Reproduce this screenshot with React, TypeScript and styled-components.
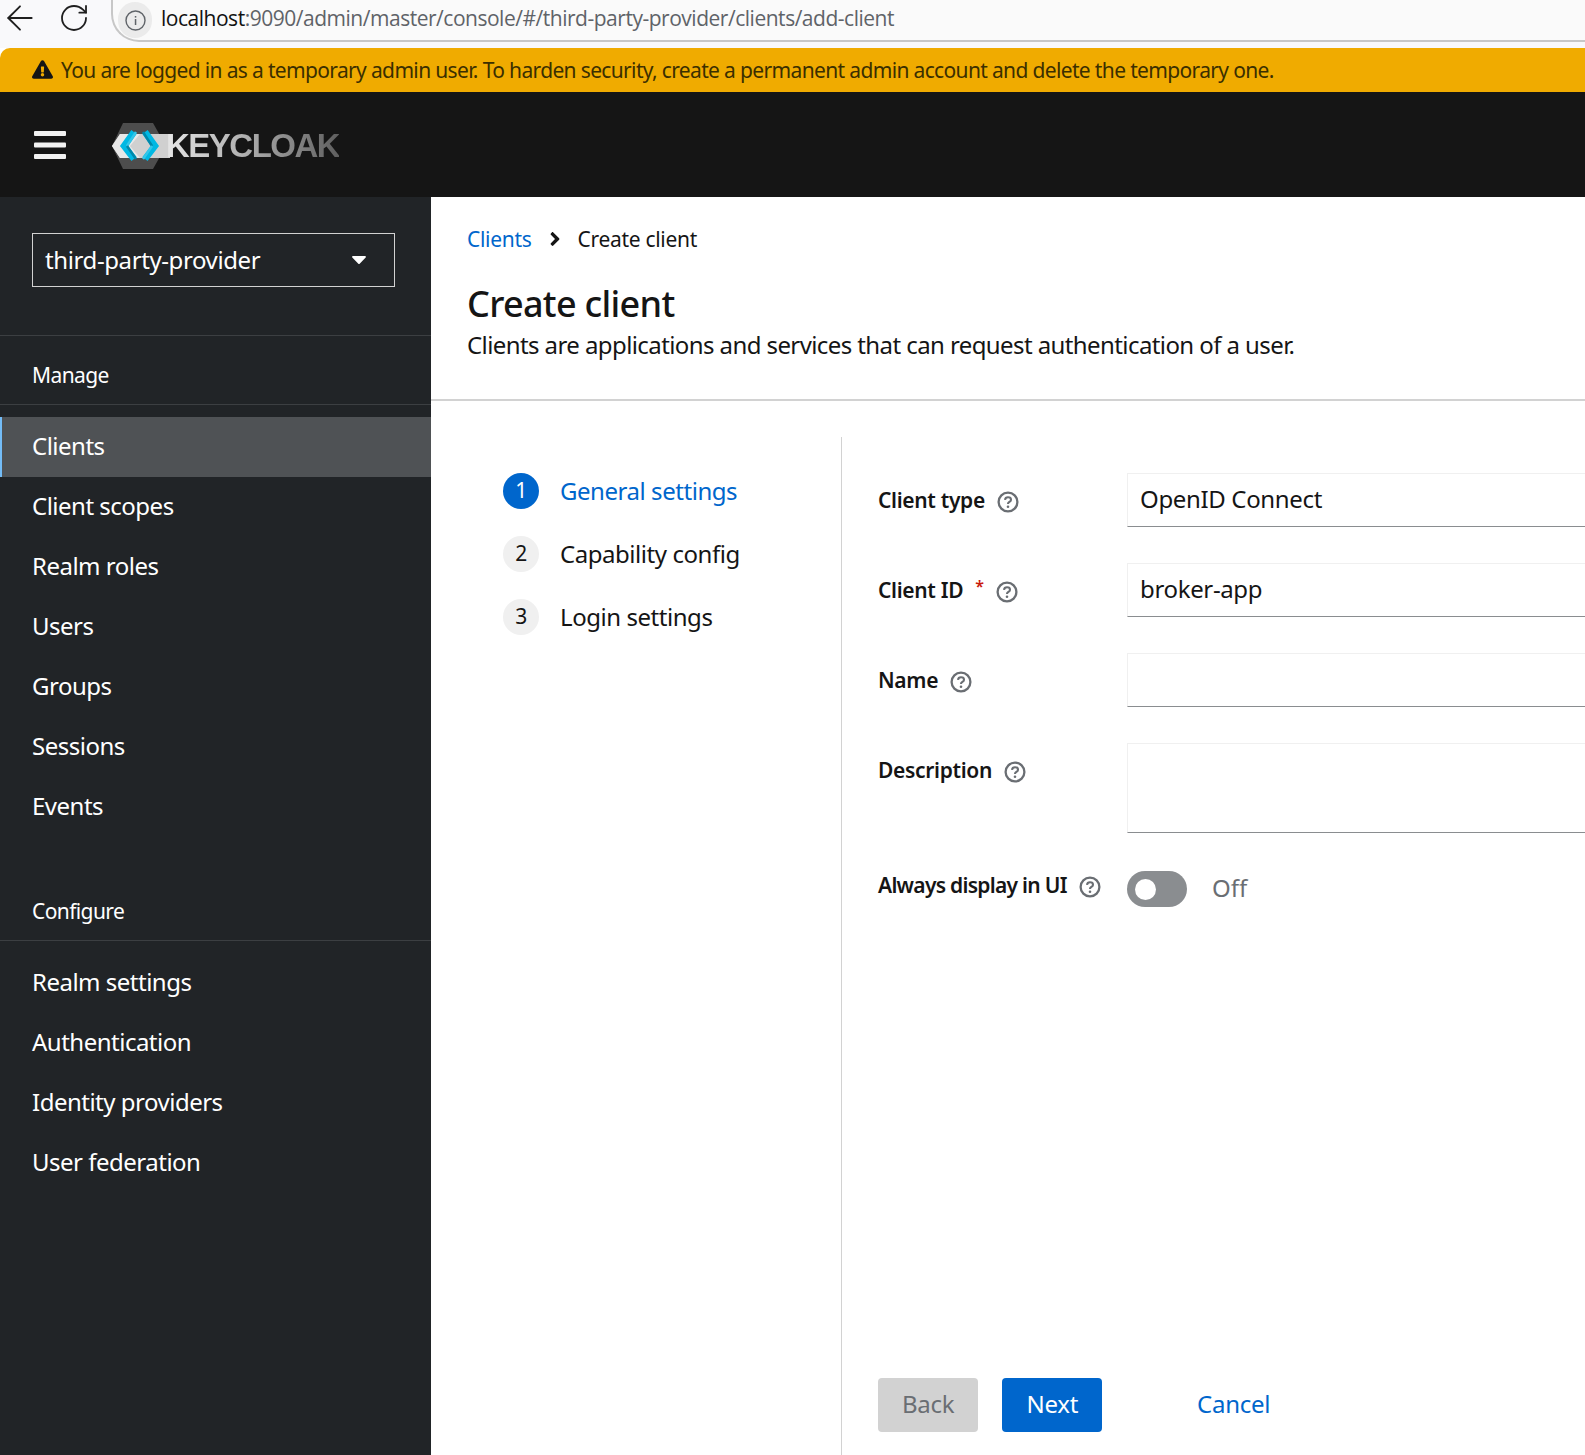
import React from "react";
import styled, { createGlobalStyle } from "styled-components";
import { ArrowLeft, RotateCw } from "lucide-react";
import { FaAngleRight, FaCaretDown, FaExclamationTriangle } from "react-icons/fa";

const GlobalStyle = createGlobalStyle`
  html, body {
    margin: 0;
    padding: 0;
    background: #fff;
  }
  * {
    box-sizing: border-box;
  }
  body {
    font-family: "Noto Sans", "Open Sans", sans-serif;
    color: #151515;
  }
`;

// ============== Browser chrome =============
const Page = styled.div`
  width: 100%;
  height: 100vh;
  display: flex;
  flex-direction: column;
  overflow: hidden;
`;
const BrowserBar = styled.div`
  height: 48px;
  flex: none;
  display: flex;
  align-items: flex-start;
  background: #f9f9fb;
`;
const BarIcon = styled.div<{ $left: number }>`
  width: 24px;
  height: 36px;
  flex: none;
  display: flex;
  align-items: center;
  justify-content: center;
  margin-left: ${(props) => props.$left}px;
  color: #1f1f1f;
  svg {
    flex: none;
  }
`;
const Omnibox = styled.div`
  flex: 1;
  height: 42px;
  margin-left: 25px;
  display: flex;
  align-items: center;
  padding-left: 5px;
  border: 2px solid #c7c7c7;
  border-right: none;
  border-top: none;
  border-radius: 0 0 0 28px;
  background: #fafafa;
`;
const InfoChip = styled.div`
  width: 34px;
  height: 36px;
  border-radius: 17px;
  background: #ebebeb;
  display: flex;
  align-items: center;
  justify-content: center;
  color: #5f6368;
`;
const Url = styled.div`
  margin-left: 9px;
  font-family: "Open Sans", sans-serif;
  font-size: 21px;
  letter-spacing: -0.48px;
  padding-bottom: 4px;
  color: #5f6368;
  white-space: nowrap;
  b {
    font-weight: 400;
    color: #111;
  }
`;
const Banner = styled.div`
  height: 44px;
  flex: none;
  background: #f0ab00;
  border-radius: 10px 0 0 0;
  display: flex;
  align-items: center;
  padding: 0 0 1px 32px;
  font-size: 21px;
  letter-spacing: -0.65px;
  color: #3b2f00;
  white-space: nowrap;
  svg {
    color: #151515;
    margin-right: 8px;
  }
`;

// ============== Masthead =============
const Masthead = styled.header`
  height: 105px;
  flex: none;
  background: #151515;
  display: flex;
  align-items: center;
  padding-left: 34px;
`;
const Logo = styled.div`
  display: flex;
  align-items: center;
  margin-left: 46px;
  padding-top: 3px;
`;
const LogoText = styled.span`
  font-family: "Liberation Sans", sans-serif;
  font-weight: 700;
  font-size: 33px;
  letter-spacing: -1.5px;
  line-height: 40px;
  margin-left: -4px;
  background: linear-gradient(90deg, #e6e6e6 0%, #b0b0b0 45%, #5f5f5f 100%);
  -webkit-background-clip: text;
  background-clip: text;
  color: transparent;
`;

// ============== Sidebar =============
const Body = styled.div`
  flex: 1;
  min-height: 0;
  display: flex;
`;
const Sidebar = styled.nav`
  width: 431px;
  flex: none;
  background: #212427;
  color: #fff;
  padding-top: 36px;
`;
const RealmSelect = styled.div`
  width: 363px;
  height: 54px;
  margin: 0 0 48px 32px;
  padding: 0 23px 2px 12px;
  border: 1px solid #d2d2d2;
  display: flex;
  align-items: center;
  justify-content: space-between;
  font-size: 24px;
  letter-spacing: -0.4px;
`;
const SectionTitle = styled.div<{ $first?: boolean }>`
  height: ${(props) => (props.$first ? "70px" : "69px")};
  display: flex;
  align-items: center;
  padding: 10px 0 0 32px;
  font-size: 21px;
  letter-spacing: -0.6px;
  margin-top: ${(props) => (props.$first ? "0" : "35px")};
  border-top: ${(props) => (props.$first ? "1px solid #3c3f42" : "none")};
  border-bottom: 1px solid #3c3f42;
  margin-bottom: 12px;
`;
const NavItem = styled.div<{ $active?: boolean }>`
  height: 60px;
  display: flex;
  align-items: center;
  padding: 0 0 3px 32px;
  font-size: 24px;
  letter-spacing: -0.5px;
  background: ${(props) => (props.$active ? "#4f5255" : "transparent")};
  box-shadow: ${(props) => (props.$active ? "inset 2px 0 0 #73bcf7" : "none")};
`;

// ============== Main =============
const Main = styled.main`
  flex: 1;
  min-width: 0;
  display: flex;
  flex-direction: column;
`;
const PageHeader = styled.section`
  height: 204px;
  flex: none;
  padding: 24px 36px 0;
  border-bottom: 2px solid #d2d2d2;
`;
const Breadcrumb = styled.div`
  height: 36px;
  display: flex;
  align-items: center;
  font-size: 21px;
  letter-spacing: -0.3px;
  svg {
    margin: 0 11px 0 13px;
  }
`;
const CrumbLink = styled.a`
  color: #06c;
`;
const Title = styled.h1`
  margin: 24px 0 0;
  font-size: 36px;
  line-height: 46px;
  font-weight: 500;
  letter-spacing: -0.7px;
`;
const Subtitle = styled.p`
  margin: 0;
  font-size: 24px;
  line-height: 36px;
  letter-spacing: -0.59px;
`;
const Wizard = styled.div`
  flex: 1;
  min-height: 0;
  margin-top: 36px;
  display: flex;
`;
const StepList = styled.ol`
  width: 411px;
  flex: none;
  margin: 0;
  padding: 36px 0 0 72px;
  list-style: none;
  display: flex;
  flex-direction: column;
  gap: 27px;
  border-right: 1.5px solid #d2d2d2;
`;
const Step = styled.li<{ $current?: boolean }>`
  display: flex;
  align-items: center;
  gap: 21px;
  height: 36px;
  font-size: 24px;
  letter-spacing: -0.45px;
  color: ${(props) => (props.$current ? "#06c" : "#151515")};
`;
const StepNumber = styled.span<{ $current?: boolean }>`
  width: 36px;
  height: 36px;
  border-radius: 50%;
  display: flex;
  align-items: center;
  justify-content: center;
  font-size: 21px;
  padding-bottom: 2px;
  background: ${(props) => (props.$current ? "#06c" : "#f0f0f0")};
  color: ${(props) => (props.$current ? "#fff" : "#151515")};
`;
const StepLabel = styled.span`
  margin-bottom: 2px;
`;
const WizardBody = styled.div`
  flex: 1;
  min-width: 0;
  padding: 36px 0 23px 36px;
  display: flex;
  flex-direction: column;
  justify-content: space-between;
`;
const Form = styled.div`
  display: flex;
  flex-direction: column;
  gap: 36px;
`;
const Row = styled.div`
  display: grid;
  grid-template-columns: 249px 1fr;
  align-items: start;
`;
const Label = styled.div<{ $top?: number; $tight?: boolean }>`
  display: flex;
  align-items: center;
  gap: 12px;
  height: 30px;
  margin-top: ${(props) => props.$top ?? 12}px;
  font-size: 21px;
  font-weight: 600;
  letter-spacing: ${(props) => (props.$tight ? "-0.72px" : "-0.32px")};
  white-space: nowrap;
  svg {
    flex: none;
    margin-top: 3px;
  }
`;
const Required = styled.span`
  color: #c9190b;
  font-size: 16px;
  margin-bottom: 8px;
`;
const FieldBox = styled.div<{ $tall?: boolean }>`
  height: ${(props) => (props.$tall ? "90px" : "54px")};
  margin-right: -4px;
  padding: 0 12px 3px;
  display: flex;
  align-items: center;
  font-size: 24px;
  letter-spacing: -0.35px;
  border: 1.5px solid #f0f0f0;
  border-bottom: 1.5px solid #8a8d90;
`;
const SwitchRow = styled.div`
  display: flex;
  align-items: center;
  gap: 25px;
  margin-top: 2px;
  font-size: 24px;
  color: #6a6e73;
`;
const Track = styled.div`
  width: 60px;
  height: 36px;
  border-radius: 18px;
  background: #8a8d90;
  display: flex;
  align-items: center;
  padding-left: 8px;
`;
const Thumb = styled.div`
  width: 21px;
  height: 21px;
  border-radius: 50%;
  background: #fff;
`;
const SwitchLabel = styled.span`
  margin-bottom: 3px;
`;
const Footer = styled.div`
  display: flex;
  align-items: center;
  margin-left: 0;
`;
const Button = styled.div<{ $variant: "primary" | "disabled" | "link" }>`
  height: 54px;
  display: flex;
  align-items: center;
  padding: 0 24px 3px;
  border-radius: 4px;
  font-size: 24px;
  letter-spacing: -0.25px;
  margin-right: 24px;
  margin-left: ${(props) => (props.$variant === "link" ? "47px" : "0")};
  background: ${(props) =>
    props.$variant === "primary" ? "#06c" : props.$variant === "disabled" ? "#d2d2d2" : "transparent"};
  color: ${(props) =>
    props.$variant === "primary" ? "#fff" : props.$variant === "disabled" ? "#6a6e73" : "#06c"};
`;

// ========================================

const manageItems = ["Clients", "Client scopes", "Realm roles", "Users", "Groups", "Sessions", "Events"];
const configureItems = ["Realm settings", "Authentication", "Identity providers", "User federation"];
const steps = ["General settings", "Capability config", "Login settings"];

const HelpIcon = () => (
  <svg width="22" height="22" viewBox="0 0 22 22" fill="none">
    <circle cx="11" cy="11" r="9.4" stroke="#6a6e73" strokeWidth="2.3" />
    <path d="M8 8.8c.2-1.6 1.4-2.5 3-2.5 1.7 0 3 1 3 2.4 0 2.3-3 2.2-3 4.2" stroke="#6a6e73" strokeWidth="2.1" />
    <circle cx="11" cy="15.8" r="1.3" fill="#6a6e73" />
  </svg>
);

const Hamburger = () => (
  <svg width="32" height="28" viewBox="0 0 32 28" fill="#f2f2f2">
    <rect y="0" width="32" height="5" rx="1" />
    <rect y="11.5" width="32" height="5" rx="1" />
    <rect y="23" width="32" height="5" rx="1" />
  </svg>
);

const LogoMark = () => (
  <svg width="58" height="46" viewBox="0 0 58 46">
    <polygon points="11,0 41,0 54,23 41,46 11,46 0,23" fill="#4d4d4d" />
    <polygon points="0,23 8,11 58,11 58,35 8,35" fill="#d0d0d0" />
    <polygon points="0,23 8,11 28,11 18,23 28,35 8,35" fill="#e8e8e8" />
    <polyline points="22,9 12,23 22,36" fill="none" stroke="#00b8e3" strokeWidth="6.5" />
    <polyline points="33,9 43,23 33,36" fill="none" stroke="#00b8e3" strokeWidth="6.5" />
    <polyline points="24,9 15,23" fill="none" stroke="#33c6e9" strokeWidth="2.5" />
    <polyline points="15,23 24,36" fill="none" stroke="#0088aa" strokeWidth="2.5" />
    <polyline points="31,9 40,23" fill="none" stroke="#0088aa" strokeWidth="2.5" />
    <polyline points="40,23 31,36" fill="none" stroke="#33c6e9" strokeWidth="2.5" />
  </svg>
);

const InfoIcon = () => (
  <svg width="21" height="21" viewBox="0 0 21 21" fill="none">
    <circle cx="10.5" cy="10.5" r="9.5" stroke="#5f6368" strokeWidth="1.4" />
    <rect x="9.8" y="9" width="1.5" height="6" fill="#5f6368" />
    <rect x="9.8" y="6" width="1.5" height="1.6" fill="#5f6368" />
  </svg>
);

export default function App() {
  return (
    <Page>
      <GlobalStyle />
      <BrowserBar>
        <BarIcon $left={8}>
          <ArrowLeft size={40} strokeWidth={1.1} />
        </BarIcon>
        <BarIcon $left={30}>
          <RotateCw size={32} strokeWidth={1.35} />
        </BarIcon>
        <Omnibox>
          <InfoChip>
            <InfoIcon />
          </InfoChip>
          <Url>
            <b>localhost</b>:9090/admin/master/console/#/third-party-provider/clients/add-client
          </Url>
        </Omnibox>
      </BrowserBar>
      <Banner>
        <FaExclamationTriangle size={21} />
        You are logged in as a temporary admin user. To harden security, create a permanent admin account and delete the temporary one.
      </Banner>
      <Masthead>
        <Hamburger />
        <Logo>
          <LogoMark />
          <LogoText>KEYCLOAK</LogoText>
        </Logo>
      </Masthead>
      <Body>
        <Sidebar>
          <RealmSelect>
            third-party-provider
            <FaCaretDown size={24} />
          </RealmSelect>
          <SectionTitle $first>Manage</SectionTitle>
          {manageItems.map((item, i) => (
            <NavItem key={item} $active={i === 0}>
              {item}
            </NavItem>
          ))}
          <SectionTitle>Configure</SectionTitle>
          {configureItems.map((item) => (
            <NavItem key={item}>{item}</NavItem>
          ))}
        </Sidebar>
        <Main>
          <PageHeader>
            <Breadcrumb>
              <CrumbLink>Clients</CrumbLink>
              <FaAngleRight size={22} />
              Create client
            </Breadcrumb>
            <Title>Create client</Title>
            <Subtitle>Clients are applications and services that can request authentication of a user.</Subtitle>
          </PageHeader>
          <Wizard>
            <StepList>
              {steps.map((step, i) => (
                <Step key={step} $current={i === 0}>
                  <StepNumber $current={i === 0}>{i + 1}</StepNumber>
                  <StepLabel>{step}</StepLabel>
                </Step>
              ))}
            </StepList>
            <WizardBody>
              <Form>
                <Row>
                  <Label>
                    Client type <HelpIcon />
                  </Label>
                  <FieldBox>OpenID Connect</FieldBox>
                </Row>
                <Row>
                  <Label>
                    Client ID <Required>*</Required> <HelpIcon />
                  </Label>
                  <FieldBox>broker-app</FieldBox>
                </Row>
                <Row>
                  <Label>
                    Name <HelpIcon />
                  </Label>
                  <FieldBox />
                </Row>
                <Row>
                  <Label>
                    Description <HelpIcon />
                  </Label>
                  <FieldBox $tall />
                </Row>
                <Row>
                  <Label $top={1} $tight>
                    Always display in UI <HelpIcon />
                  </Label>
                  <SwitchRow>
                    <Track>
                      <Thumb />
                    </Track>
                    <SwitchLabel>Off</SwitchLabel>
                  </SwitchRow>
                </Row>
              </Form>
              <Footer>
                <Button $variant="disabled">Back</Button>
                <Button $variant="primary">Next</Button>
                <Button $variant="link">Cancel</Button>
              </Footer>
            </WizardBody>
          </Wizard>
        </Main>
      </Body>
    </Page>
  );
}
